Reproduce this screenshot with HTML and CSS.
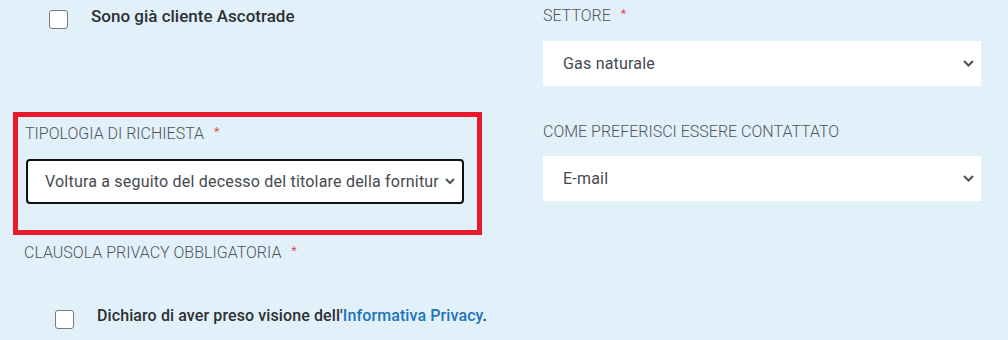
FILE: index.html
```html
<!DOCTYPE html>
<html lang="it">
<head>
<meta charset="utf-8">
<link rel="stylesheet" href="styles.css">
</head>
<body>
<form class="form">
  <div class="cell check-row top-check">
    <span class="checkbox"></span>
    <span class="check-label">Sono già cliente Ascotrade</span>
  </div>
  <div class="cell field field-first">
    <div class="label">SETTORE <span class="req">*</span></div>
    <div class="select">
      <span class="value">Gas naturale</span>
      <svg class="chev" width="11" height="7" viewBox="0 0 11 7"><path d="M1 1 L5.5 5.5 L10 1" fill="none" stroke="#4d5257" stroke-width="2"/></svg>
    </div>
  </div>
  <div class="cell highlight">
    <div class="label">TIPOLOGIA DI RICHIESTA <span class="req">*</span></div>
    <div class="select select-active">
      <span class="value">Voltura a seguito del decesso del titolare della fornitura</span>
      <svg class="chev" width="10" height="7" viewBox="0 0 10 7"><path d="M1 1 L5 5 L9 1" fill="none" stroke="#4d5257" stroke-width="2"/></svg>
    </div>
  </div>
  <div class="cell field field-second">
    <div class="label">COME PREFERISCI ESSERE CONTATTATO</div>
    <div class="select">
      <span class="value">E-mail</span>
      <svg class="chev" width="11" height="7" viewBox="0 0 11 7"><path d="M1 1 L5.5 5.5 L10 1" fill="none" stroke="#4d5257" stroke-width="2"/></svg>
    </div>
  </div>
  <div class="cell privacy">
    <div class="label privacy-label">CLAUSOLA PRIVACY OBBLIGATORIA <span class="req">*</span></div>
    <div class="check-row privacy-check">
      <span class="checkbox"></span>
      <span class="check-label privacy-text">Dichiaro di aver preso visione dell'<a class="link" href="#">Informativa Privacy</a>.</span>
    </div>
  </div>
</form>
</body>
</html>
```
FILE: styles.css
```css
html, body {
  margin: 0;
  padding: 0;
  background: #e2f0f9;
  font-family: Roboto, "Noto Sans", Arial, sans-serif;
  color: #4a4f55;
}

.form {
  display: grid;
  grid-template-columns: 469px 438px;
  grid-template-rows: 112px 123px auto;
  column-gap: 61px;
  padding-left: 13px;
  width: 1008px;
  height: 340px;
  box-sizing: border-box;
}

.check-row {
  display: flex;
  align-items: flex-start;
  gap: 23px;
}

.top-check {
  padding: 6px 0 0 36px;
}

.checkbox {
  flex: none;
  width: 17px;
  height: 17px;
  margin-top: 4px;
  background: #fff;
  border: 1px solid #7a7a7a;
  border-radius: 3px;
}

.check-label {
  font-size: 17px;
  font-weight: 500;
  line-height: 20px;
  color: #2c3034;
}

.privacy-text {
  font-size: 16px;
  letter-spacing: 0.1px;
}

.label {
  font-size: 16px;
  line-height: 18px;
  font-weight: 300;
  color: #4f555b;
}

.req {
  color: #e5202e;
  font-size: 13px;
  margin-left: 6px;
  vertical-align: 3px;
}

.select {
  display: flex;
  align-items: center;
  height: 45px;
  box-sizing: border-box;
  background: #fff;
  padding: 0 7px 0 20px;
  gap: 6px;
}

.value {
  flex: 1;
  min-width: 0;
  overflow: hidden;
  white-space: nowrap;
  font-size: 16px;
  letter-spacing: 0.2px;
  color: #444a50;
}

.chev {
  flex: none;
}

.field-first {
  padding-top: 5px;
}
.field-first .select {
  margin-top: 16px;
}

.field-second {
  padding-top: 11px;
}
.field-second .select {
  margin-top: 15px;
}

.highlight {
  border: 5px solid #e8192b;
  padding: 6px 0 0 7px;
}
.highlight .select {
  width: 438px;
  margin: 16px 0 0 1px;
  border: 2px solid #111;
  border-radius: 4px;
  padding-left: 17px;
  padding-right: 7px;
}

.privacy {
  grid-column: 1 / 3;
  padding-left: 11px;
}

.privacy-label {
  margin-top: 7px;
}

.privacy-check {
  margin-top: 44px;
  padding-left: 31px;
  gap: 23px;
}
.privacy-check .checkbox {
  margin-top: 4px;
}

.link {
  color: #1c74bd;
  font-weight: 500;
  text-decoration: none;
}
```
